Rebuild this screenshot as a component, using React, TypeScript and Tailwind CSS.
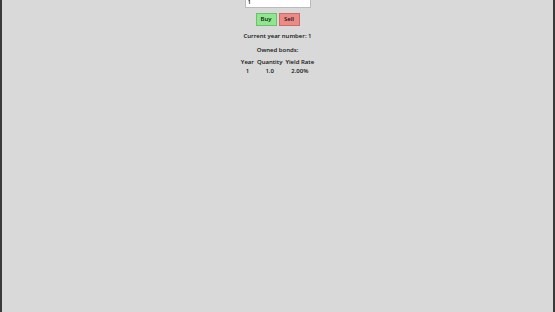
export default function App() {
  const bonds = [{ year: 1, quantity: "1.0", rate: "2.00%" }];

  return (
    <div className="h-[312px] w-[555px] overflow-hidden bg-[#d9d9d9] border-l-2 border-r-2 border-[#3a3a3a] flex flex-col items-center font-['Open_Sans',sans-serif] text-[6px] font-semibold text-[#111]">
      <input
        type="text"
        defaultValue="1"
        className="mt-[-4px] w-[66px] h-[12px] bg-white border border-[#bbb] px-[2px] text-[6px] leading-none outline-none"
      />
      <div className="mt-[5px] flex gap-[2px]">
        <button className="w-[21px] h-[13px] bg-[#8ee68e] border border-[#6cc06c] text-[6px] font-semibold">
          Buy
        </button>
        <button className="w-[21px] h-[13px] bg-[#ec8a86] border border-[#cc6a66] text-[6px] font-semibold">
          Sell
        </button>
      </div>
      <p className="mt-[5px] leading-[10px]">Current year number: 1</p>
      <p className="mt-[4px] leading-[10px]">Owned bonds:</p>
      <table className="mt-[3px] border-separate border-spacing-x-[3px] border-spacing-y-0">
        <thead>
          <tr>
            <th className="font-semibold leading-[9px]">Year</th>
            <th className="font-semibold leading-[9px]">Quantity</th>
            <th className="font-semibold leading-[9px]">Yield Rate</th>
          </tr>
        </thead>
        <tbody>
          {bonds.map((b) => (
            <tr key={b.year}>
              <td className="text-center leading-[9px]">{b.year}</td>
              <td className="text-center leading-[9px]">{b.quantity}</td>
              <td className="text-center leading-[9px]">{b.rate}</td>
            </tr>
          ))}
        </tbody>
      </table>
    </div>
  );
}
